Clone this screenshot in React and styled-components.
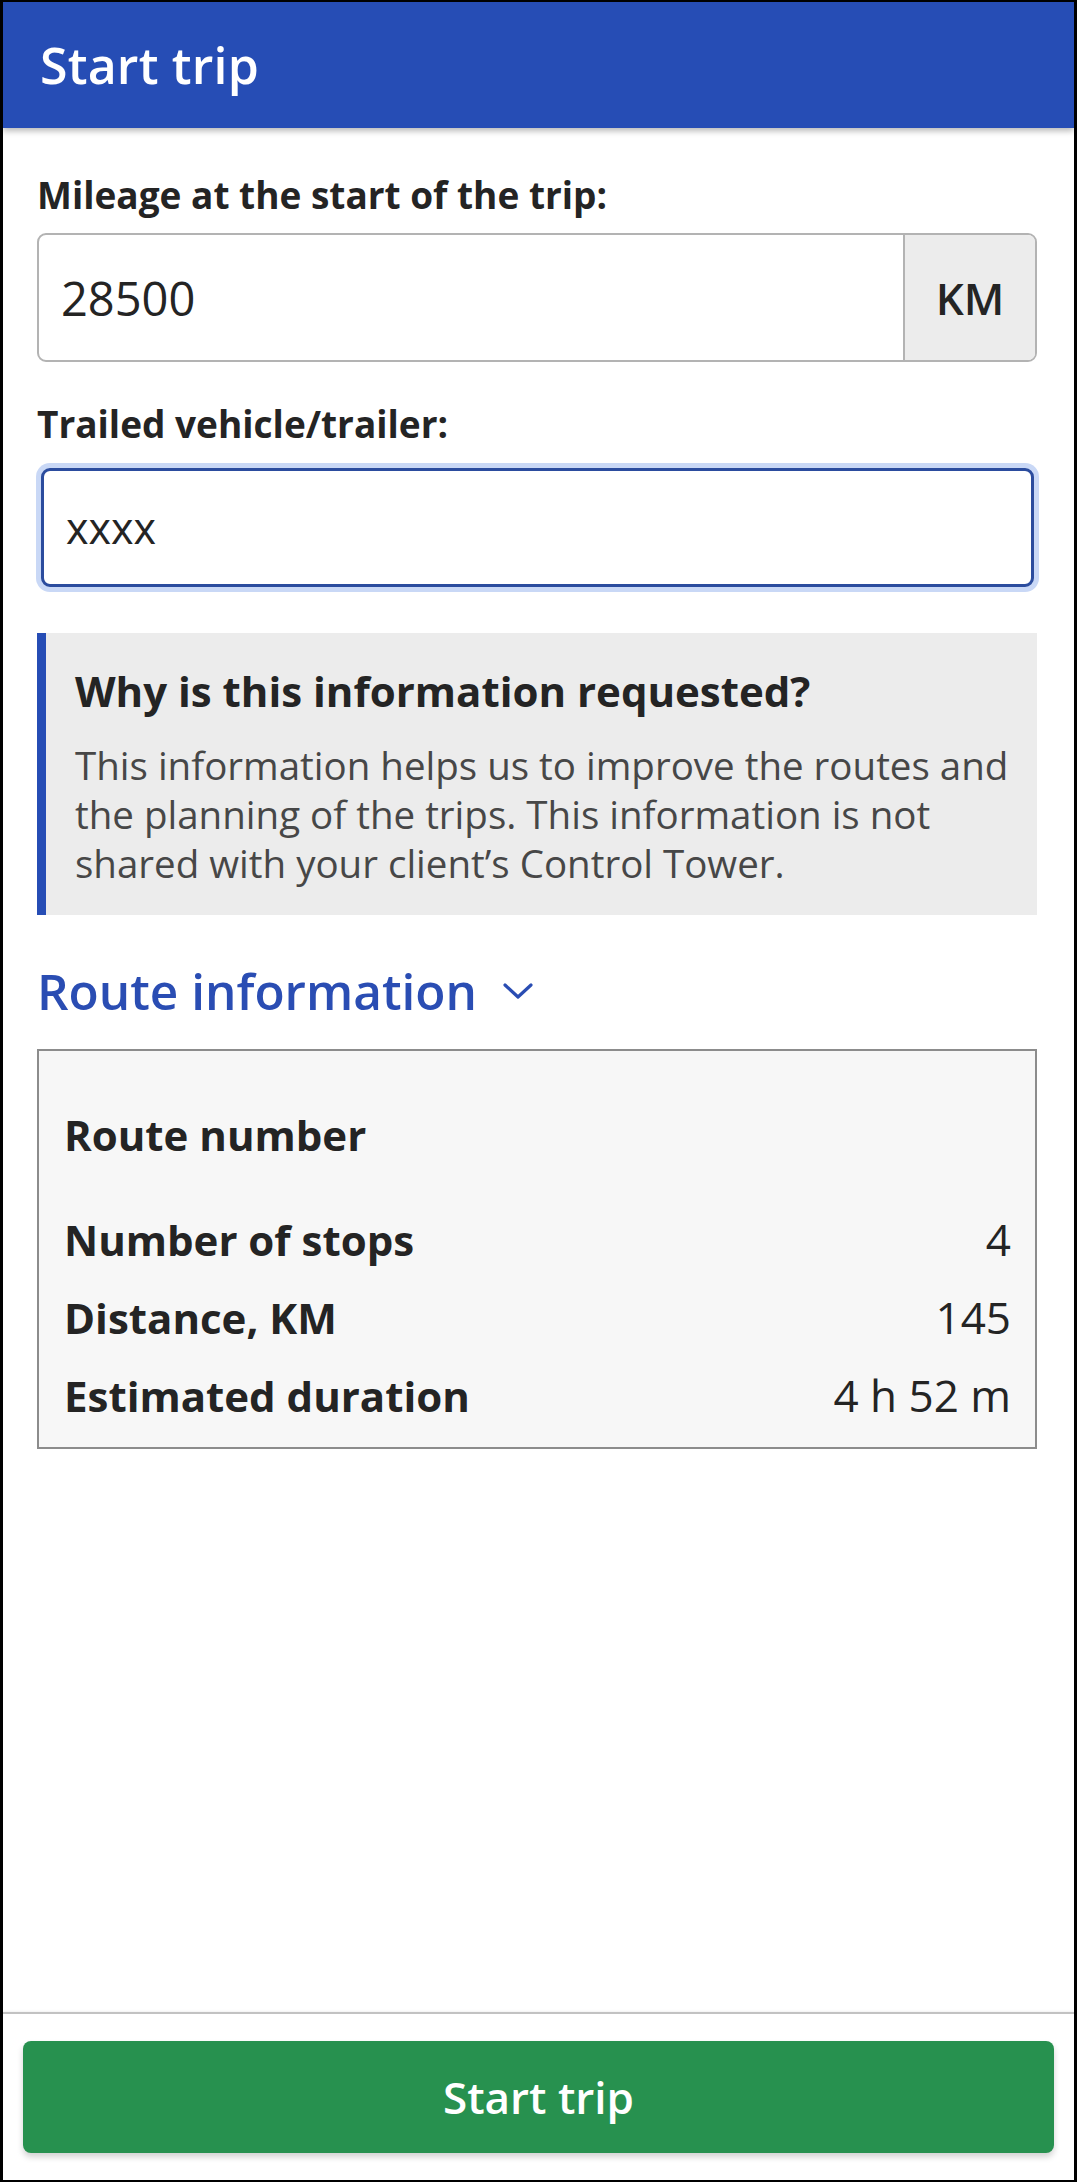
import React from "react";
import styled, { createGlobalStyle } from "styled-components";

const GlobalStyle = createGlobalStyle`
  *, *::before, *::after { box-sizing: border-box; }
  html, body { margin: 0; padding: 0; background: #ffffff; }
  body {
    font-family: "Open Sans", "Liberation Sans", sans-serif;
    color: #242424;
    -webkit-font-smoothing: antialiased;
  }
`;

const Frame = styled.div`
  min-height: 100vh;
  display: flex;
  flex-direction: column;
  border-style: solid;
  border-color: #000;
  border-width: 2px 3px 2px 3px;
  background: #fff;
`;

const Header = styled.header`
  height: 126px;
  background: #264db5;
  display: flex;
  align-items: center;
  padding: 0 37px;
  box-shadow: 0 3px 6px rgba(0, 0, 0, 0.28);
  position: relative;
  z-index: 1;
`;

const Title = styled.h1`
  margin: 0;
  font-size: 50px;
  line-height: 60px;
  font-weight: 600;
  color: #fff;
  letter-spacing: 0.2px;
`;

const Main = styled.main`
  flex: 1;
  padding: 45px 37px 40px 34px;
  display: flex;
  flex-direction: column;
`;

const Label = styled.label`
  display: block;
  font-size: 37px;
  line-height: 44px;
  font-weight: 700;
  color: #242424;
  margin-bottom: 16px;
`;

const Field = styled.div`
  display: flex;
  height: 129px;
  border: 2.5px solid #b3b3b3;
  border-radius: 9px;
  overflow: hidden;
  margin-bottom: 40px;
  background: #fff;
`;

const TextInput = styled.input`
  flex: 1;
  min-width: 0;
  border: none;
  outline: none;
  background: transparent;
  padding: 0 0 0 22px;
  font-family: "Open Sans", "Liberation Sans", sans-serif;
  font-size: ${(p) => p.$size || 44}px;
  color: #242424;
`;

const Addon = styled.div`
  width: 132px;
  display: flex;
  align-items: center;
  justify-content: center;
  background: #ececec;
  border-left: 2.5px solid #b3b3b3;
  font-size: 44px;
  font-weight: 600;
  color: #242424;
`;

const FocusField = styled.div`
  display: flex;
  height: 119px;
  margin: 6px 3px 46px 4px;
  border: 3px solid #2b4c9e;
  border-radius: 9px;
  box-shadow: 0 0 0 5px #c9d8f6;
  background: #fff;
`;

const Notice = styled.section`
  background: #ececec;
  border-left: 9px solid #264db5;
  padding: 30px 14px 27px 29px;
  margin-bottom: 46px;
`;

const NoticeTitle = styled.h2`
  margin: 0 0 22px 0;
  font-size: 42px;
  line-height: 56px;
  font-weight: 700;
  color: #242424;
`;

const NoticeText = styled.p`
  margin: 0;
  font-size: 38.5px;
  line-height: 49px;
  color: #474747;
`;

const Toggle = styled.button`
  display: flex;
  align-items: center;
  gap: 26px;
  border: none;
  background: none;
  padding: 0;
  margin: 0 0 28px 0;
  font-family: "Open Sans", "Liberation Sans", sans-serif;
  font-size: 49.5px;
  line-height: 60px;
  font-weight: 600;
  color: #2a4db3;
  cursor: pointer;
  align-self: flex-start;
`;

const Card = styled.div`
  border: 2.5px solid #8c8c8c;
  background: #f7f7f7;
  padding: 56px 24px 23px 25px;
`;

const CardSection = styled.div`
  display: flex;
  flex-direction: column;
  gap: 21px;
  margin-bottom: ${(p) => p.$gap || 0}px;
`;

const Row = styled.div`
  display: flex;
  justify-content: space-between;
  align-items: baseline;
  line-height: 56px;
`;

const RowLabel = styled.span`
  font-size: 42px;
  font-weight: 700;
  color: #242424;
`;

const RowValue = styled.span`
  font-size: 44px;
  font-weight: 400;
  color: #242424;
`;

const Footer = styled.footer`
  border-top: 2px solid #c2c2c2;
  box-shadow: 0 -1px 2px rgba(0, 0, 0, 0.06);
  padding: 27px 20px 27px 20px;
`;

const PrimaryButton = styled.button`
  width: 100%;
  height: 112px;
  border: none;
  border-radius: 8px;
  background: #27914f;
  color: #fff;
  font-family: "Open Sans", "Liberation Sans", sans-serif;
  font-size: 44px;
  font-weight: 600;
  box-shadow: 0 4px 6px rgba(0, 0, 0, 0.18);
  cursor: pointer;
`;

const Chevron = () => (
  <svg width="30" height="17" viewBox="0 0 30 17" fill="none">
    <polyline
      points="2,2 15,14 28,2"
      stroke="#2a4db3"
      strokeWidth="3.2"
      strokeLinecap="round"
      strokeLinejoin="round"
    />
  </svg>
);

const routeRows = [
  ["Number of stops", "4"],
  ["Distance, KM", "145"],
  ["Estimated duration", "4 h 52 m"],
];

export default function App() {
  return (
    <>
      <GlobalStyle />
      <Frame>
        <Header>
          <Title>Start trip</Title>
        </Header>
        <Main>
          <Label>Mileage at the start of the trip:</Label>
          <Field>
            <TextInput readOnly value="28500" $size={47} />
            <Addon>KM</Addon>
          </Field>

          <Label>Trailed vehicle/trailer:</Label>
          <FocusField>
            <TextInput readOnly value="xxxx" $size={43} />
          </FocusField>

          <Notice>
            <NoticeTitle>Why is this information requested?</NoticeTitle>
            <NoticeText>
              This information helps us to improve the routes and the planning
              of the trips. This information is not shared with your client’s
              Control Tower.
            </NoticeText>
          </Notice>

          <Toggle type="button">
            Route information
            <Chevron />
          </Toggle>

          <Card>
            <CardSection $gap={48}>
              <Row>
                <RowLabel>Route number</RowLabel>
                <RowValue></RowValue>
              </Row>
            </CardSection>
            <CardSection>
              {routeRows.map(([label, value]) => (
                <Row key={label}>
                  <RowLabel>{label}</RowLabel>
                  <RowValue>{value}</RowValue>
                </Row>
              ))}
            </CardSection>
          </Card>
        </Main>
        <Footer>
          <PrimaryButton type="button">Start trip</PrimaryButton>
        </Footer>
      </Frame>
    </>
  );
}
